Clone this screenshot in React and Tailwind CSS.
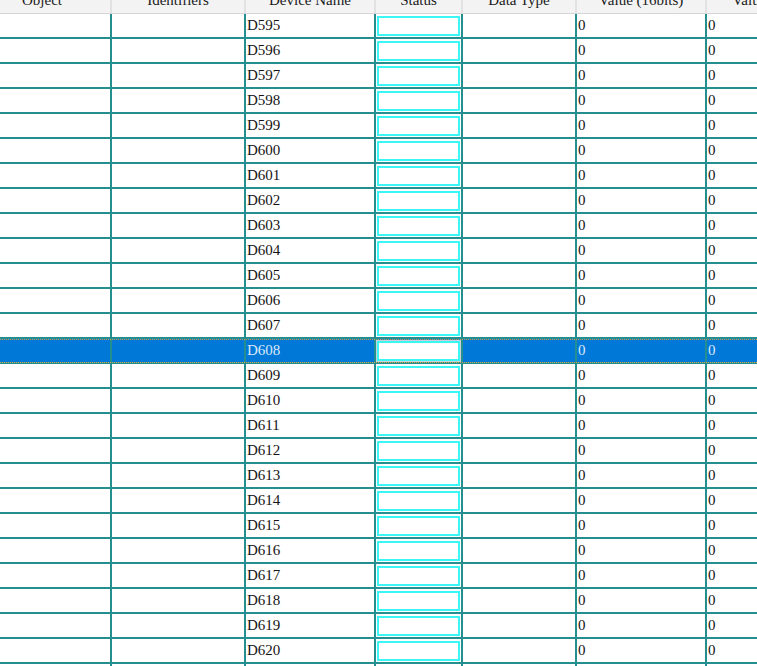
import React from "react";

const widths = ["w-[138px]", "w-[134px]", "w-[130px]", "w-[87px]", "w-[114px]", "w-[130px]", "w-[137px]"];
const headers = ["Object", "Identifiers", "Device Name", "Status", "Data Type", "Value (16bits)", "Value (32bits)"];

function Row({ name, selected }) {
  const txt = selected ? "text-[#dce9fa]" : "text-[#141414]";
  const bg = selected ? "bg-[#0078d7]" : "bg-white";
  const cell = `shrink-0 h-[25px] border-r-2 border-b-2 border-[#258f8f] ${bg}`;
  return (
    <div className="relative flex h-[25px]">
      <div className={`${cell} ${widths[0]}`} />
      <div className={`${cell} ${widths[1]}`} />
      <div className={`${cell} ${widths[2]} flex items-center pl-[1px] ${txt}`}>{name}</div>
      <div className={`${cell} ${widths[3]} pt-[2px] px-[1px]`}>
        <div className={`h-[20px] w-full bg-white border-2 border-[#3cf6f6] ${selected ? "outline outline-1 outline-[#c8d0d8]" : ""}`} />
      </div>
      <div className={`${cell} ${widths[4]}`} />
      <div className={`${cell} ${widths[5]} flex items-center pl-[1px] ${txt}`}>0</div>
      <div className={`${cell} ${widths[6]} flex items-center pl-[1px] ${txt}`}>0</div>
      {selected && (
        <div className="pointer-events-none absolute inset-x-0 top-0 h-[24px] border-y border-dotted border-[#d9a04a]" />
      )}
    </div>
  );
}

export default function App() {
  const rows = [];
  for (let i = 595; i <= 621; i++) rows.push(i);
  return (
    <div
      className="w-[757px] h-[666px] overflow-hidden bg-white text-[15px]"
      style={{ fontFamily: '"Liberation Serif", "Times New Roman", serif' }}
    >
      <div className="-ml-[26px]">
        <div className="flex h-[14px] overflow-hidden bg-[#f3f3f3] border-b border-[#d6d6d6]">
          {headers.map((h, i) => (
            <div
              key={h}
              className={`shrink-0 ${widths[i]} h-[14px] overflow-hidden border-r-2 border-[#e2e2e2]`}
            >
              <div className="-mt-[12px] h-[25px] flex items-center justify-center whitespace-nowrap text-[#1a1a1a]">
                {h}
              </div>
            </div>
          ))}
        </div>
        {rows.map((n) => (
          <Row key={n} name={`D${n}`} selected={n === 608} />
        ))}
      </div>
    </div>
  );
}
